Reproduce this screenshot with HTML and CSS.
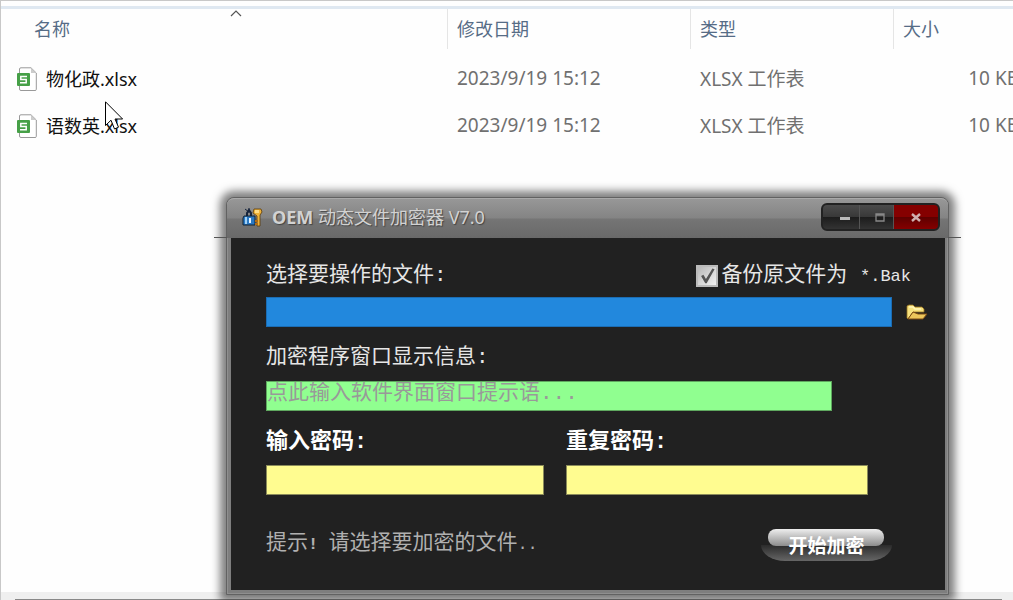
FILE: index.html
```html
<!DOCTYPE html>
<html lang="zh-CN">
<head>
<meta charset="UTF-8">
<meta name="viewport" content="width=device-width, initial-scale=1.0">
<title>OEM 动态文件加密器 V7.0</title>
<link rel="stylesheet" href="styles.css">
</head>
<body>
    <div class="explorer">
        <div class="toolbar-edge"></div>
        <svg class="sort-arrow" width="12" height="7" viewBox="0 0 12 7"><path d="M1 6 L6 1 L11 6" fill="none" stroke="#555" stroke-width="1.2"/></svg>

        <table class="files">
            <thead>
                <tr>
                    <th class="col-name">名称</th>
                    <th class="col-date">修改日期</th>
                    <th class="col-type">类型</th>
                    <th class="col-size">大小</th>
                </tr>
            </thead>
            <tbody>
                <tr>
                    <td class="name">
                        <div class="file">
                            <svg width="20" height="25" viewBox="0 0 20 25">
                                <path d="M2.5 2 Q2.5 .8 4 .8 H14 L19.3 6 V22.5 Q19.3 23.5 18 23.5 H4 Q2.5 23.5 2.5 22 Z" fill="#fff" stroke="#999"/>
                                <path d="M14 1 V6 H19 Z" fill="#ccc"/>
                                <rect x="0" y="6" width="13" height="13" rx="1" fill="#46a047"/>
                                <path d="M10 9.5 H3.8 V12.5 H9.2 V15.7 H3" fill="none" stroke="#fff" stroke-width="1.5"/>
                            </svg>
                            <span>物化政.xlsx</span>
                        </div>
                    </td>
                    <td>2023/9/19 15:12</td>
                    <td>XLSX 工作表</td>
                    <td class="size">10 KB</td>
                </tr>
                <tr>
                    <td class="name">
                        <div class="file">
                            <svg width="20" height="25" viewBox="0 0 20 25">
                                <path d="M2.5 2 Q2.5 .8 4 .8 H14 L19.3 6 V22.5 Q19.3 23.5 18 23.5 H4 Q2.5 23.5 2.5 22 Z" fill="#fff" stroke="#999"/>
                                <path d="M14 1 V6 H19 Z" fill="#ccc"/>
                                <rect x="0" y="6" width="13" height="13" rx="1" fill="#46a047"/>
                                <path d="M10 9.5 H3.8 V12.5 H9.2 V15.7 H3" fill="none" stroke="#fff" stroke-width="1.5"/>
                            </svg>
                            <span>语数英.xlsx</span>
                        </div>
                    </td>
                    <td>2023/9/19 15:12</td>
                    <td>XLSX 工作表</td>
                    <td class="size">10 KB</td>
                </tr>
            </tbody>
        </table>

        <div class="statusbar"></div>
    </div>

    <svg class="cursor" width="19" height="31" viewBox="0 0 19 31"><path d="M.5 .8 V24.5 L6 19.2 L9.5 28 L13.5 26.2 L10 18 H17.6 Z" fill="#fff" stroke="#000"/></svg>

    <div class="window">
        <div class="titlebar">
            <svg width="22" height="22" viewBox="0 0 22 22">
                <path d="M5 9 V6 L7 3 L9 6 V9" fill="none" stroke="#16243c" stroke-width="2"/>
                <path d="M3 2 L7 5 M7 1 V6" stroke="#16243c"/>
                <path d="M2 9 H13 V18 H1 V11 Z" fill="#2a79c4" stroke="#123"/>
                <path d="M3 10 H5 V17 H3 Z" fill="#9fd0f5"/>
                <rect x="7" y="11" width="2" height="5" fill="#e8f4ff"/>
                <path d="M12 2 H19 L20 5 L18 8 V19 H15 V9 L11 6 Z" fill="#efb339" stroke="#5a3a08" stroke-width=".8"/>
                <path d="M13 3 H17 V6 H13 Z" fill="#ffdc83"/>
                <path d="M13 14 H16 M13 17 H16" stroke="#b36c12" stroke-width="2"/>
            </svg>
            <h1><b>OEM</b> 动态文件加密器 V7.0</h1>
            <div class="controls">
                <button type="button" class="min" aria-label="最小化"><svg width="10" height="12" viewBox="0 0 10 12"><rect x="0" y="6" width="10" height="3" fill="#bbb"/></svg></button>
                <button type="button" class="max" aria-label="最大化"><svg width="10" height="9" viewBox="0 0 10 9"><path d="M1 1 H9 V8 H1 Z M1 2 H9" fill="none" stroke="#888" stroke-width="1.3"/></svg></button>
                <button type="button" class="close" aria-label="关闭"><svg width="10" height="9" viewBox="0 0 10 9"><path d="M1 1 L9 8 M9 1 L1 8" stroke="#d0b0b0" stroke-width="2.4"/></svg></button>
            </div>
        </div>

        <form class="panel">
            <div class="row head">
                <label for="filePath">选择要操作的文件:</label>
                <label class="backup"><input type="checkbox" checked><span>备份原文件为 <span class="latin">*.Bak</span></span></label>
            </div>
            <div class="row path">
                <input type="text" id="filePath" class="blue">
                <button type="button" class="browse" aria-label="浏览">
                    <svg width="23" height="17" viewBox="0 0 23 17">
                        <path d="M1 2 L3 1 H7 L9 3 H16 L18 5 V8 H7 L2 15 L1 14 Z" fill="#f7e27e" stroke="#9b7420" stroke-width=".8"/>
                        <path d="M2 15 L7 8 L12 10 H21 L17 15 Z" fill="#edc65b" stroke="#7b4a14"/>
                        <path d="M3 3 H7 L9 5 H15" fill="none" stroke="#fff6b8" stroke-width="1.5"/>
                    </svg>
                </button>
            </div>

            <label for="message">加密程序窗口显示信息:</label>
            <input type="text" id="message" class="green" placeholder="点此输入软件界面窗口提示语...">

            <div class="row passwords">
                <div class="field first">
                    <label for="password">输入密码:</label>
                    <input type="password" id="password">
                </div>
                <div class="field second">
                    <label for="repeat">重复密码:</label>
                    <input type="password" id="repeat">
                </div>
            </div>

            <div class="row foot">
                <p>提示<b class="latin">! </b>请选择要加密的文件<span class="latin">..</span></p>
                <button type="button" class="start">开始加密</button>
            </div>
        </form>
    </div>
</body>
</html>
```

FILE: styles.css
```css
* {
    box-sizing: border-box;
}

body {
    margin: 0;
    height: 100vh;
    overflow: hidden;
    position: relative;
    background: #fefefe;
    font-family: "Noto Sans", "Noto Sans CJK SC", sans-serif;
    font-size: 18px;
}

.explorer {
    height: 100%;
    display: flex;
    flex-direction: column;
    overflow: hidden;
    border-top: 1px solid #c8c8c8;
    border-left: 1px solid #c8c8c8;
}

.toolbar-edge {
    flex: none;
    height: 8px;
    border-bottom: 3px solid #dfe8f1;
}

.sort-arrow {
    position: absolute;
    left: 230px;
    top: 10px;
}

/* the size column runs past the right edge */
.files {
    width: calc(100% + 6px);
    table-layout: fixed;
    border-collapse: separate;
    border-spacing: 0;
    color: #707070;
}

.files th {
    height: 40px;
    padding: 0 9px 2px;
    text-align: left;
    font-weight: 400;
    color: #566c86;
    border-left: 1px solid #e5e5e5;
}

.files th.col-name {
    border-left: 0;
    padding-left: 33px;
}

.col-date {
    width: 243px;
}

.col-type {
    width: 203px;
}

.col-size {
    width: 126px;
}

.files td {
    height: 47px;
    padding: 0 0 3px 10px;
    white-space: nowrap;
    font-size: 19px;
}

.files tbody::before {
    content: "";
    display: block;
    height: 7px;
}

.files td.name {
    padding: 0 0 0 16px;
    color: #111;
    font-size: 18px;
}

.files td.size {
    text-align: right;
}

.file {
    display: flex;
    align-items: center;
    gap: 9px;
}

.file span {
    padding-bottom: 3px;
}

.statusbar {
    flex: none;
    height: 8px;
    margin-top: auto;
    padding: 7px 11px 0 14px;
    background: #efefef;
}

.statusbar::after {
    content: "";
    display: block;
    height: 1px;
    background: #888;
}

.cursor {
    position: absolute;
    left: 105px;
    top: 101px;
}

.window {
    position: absolute;
    left: 226px;
    top: 197px;
    width: 723px;
    border-radius: 8px 8px 0 0;
    background: #7e7e7e;
    border: 1px solid #626262;
    box-shadow: inset 0 0 0 1px #8f8f8f, 0 0 9px 6px rgba(0, 0, 0, 0.5);
    padding: 0 3px 4px 4px;
}

/* dark seam under the title bar that sticks out over the shadow */
.window::before,
.window::after {
    content: "";
    position: absolute;
    top: 39px;
    width: 13px;
    height: 1px;
    background: #555;
}

.window::before {
    left: -13px;
}

.window::after {
    right: -13px;
}

.titlebar {
    display: flex;
    align-items: flex-start;
    height: 40px;
    margin: 0 -3px 0 -4px;
    padding: 4px 8px 0 15px;
    border-radius: 7px 7px 0 0;
    border-top: 1px solid #aaa;
    background: linear-gradient(#979797, #848484 19px, #757575 20px, #696969);
}

.titlebar > svg {
    margin-top: 4px;
}

.titlebar h1 {
    flex: 1;
    margin: 0 0 0 8px;
    line-height: 28px;
    font-size: 18px;
    font-weight: 400;
    color: #d2d2d2;
    text-shadow: 1px 1px 1px #444;
}

.controls {
    display: flex;
    height: 28px;
    border: 2px solid #222;
    border-radius: 6px;
    overflow: hidden;
    background: #222;
}

.controls button {
    display: flex;
    align-items: center;
    justify-content: center;
    padding: 0;
    border: 0;
    border-right: 1px solid #555;
    background: linear-gradient(#4b4b4b, #383838 50%, #1c1c1c 51%, #333);
}

.controls .min {
    width: 37px;
    padding-left: 8px;
}

.controls .max {
    width: 34px;
    padding-left: 6px;
}

.controls .close {
    width: 44px;
    border-right: 0;
    background: linear-gradient(#850000 50%, #5e0000 51%, #850000);
}

.panel {
    background: #212121;
    padding: 23px 16px 29px 35px;
    font-family: "Liberation Mono", "Noto Sans CJK SC", monospace;
    font-size: 21px;
    color: #e6e6e6;
}

.panel label {
    display: block;
    height: 30px;
    line-height: 30px;
}

.row {
    display: flex;
}

.head {
    justify-content: space-between;
    padding-right: 18px;
    margin-bottom: 6px;
}

.panel .backup {
    display: flex;
    align-items: center;
    gap: 3px;
}

.latin {
    font-size: 17px;
}

.backup input {
    appearance: none;
    width: 22px;
    height: 22px;
    margin: 0;
    border: 2px solid #bbb;
    background: linear-gradient(135deg, #b8b8b8, #f2f2f2);
}

.backup input:checked::before {
    content: "";
    display: block;
    height: 18px;
    background: #555;
    clip-path: polygon(15% 50%, 28% 43%, 42% 66%, 78% 8%, 90% 12%, 46% 90%, 38% 90%);
}

.panel input[type="text"],
.panel input[type="password"] {
    display: block;
    width: 100%;
    height: 30px;
    padding: 0;
    border: 1px solid #8b8b5a;
    border-radius: 0;
    background: #fffc90;
    font: inherit;
}

.path {
    align-items: center;
    gap: 14px;
    margin-bottom: 16px;
}

.panel input.blue {
    flex: 1;
    border-color: #1b6db4;
    background: #2288dd;
    color: #fff;
}

.browse {
    display: flex;
    width: 23px;
    padding: 0;
    border: 0;
    background: none;
}

.panel input.green {
    width: 566px;
    margin: 8px 0 17px;
    padding-bottom: 5px;
    border-color: #5fa85f;
    background: #90ff90;
}

.green::placeholder {
    color: #999;
    opacity: 1;
}

.passwords {
    gap: 22px;
}

.first {
    width: 278px;
}

.second {
    width: 302px;
}

.field label {
    margin-bottom: 7px;
    font-size: 22px;
    font-weight: 700;
    color: #fff;
}

.foot {
    align-items: center;
    justify-content: space-between;
    margin-top: 33px;
    padding-right: 37px;
}

.foot p {
    margin: 0;
    line-height: 32px;
    color: #b0b0b0;
}

.start {
    position: relative;
    z-index: 0;
    width: 131px;
    height: 32px;
    padding: 0;
    border: 0;
    border-radius: 0 0 24px 24px / 0 0 16px 16px;
    background: linear-gradient(transparent 16px, #2b2b2b 16px, #666);
    font-family: "Noto Sans CJK SC", sans-serif;
    font-size: 19px;
    font-weight: 700;
    color: #fff;
}

/* glossy upper half */
.start::before {
    content: "";
    position: absolute;
    z-index: -1;
    left: 7px;
    right: 8px;
    top: 0;
    height: 17px;
    border-radius: 8px;
    background: linear-gradient(#eee, #8c8c8c);
}
```
